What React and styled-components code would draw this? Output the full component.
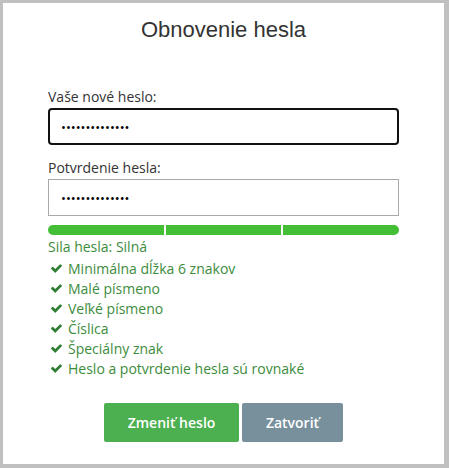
import React from "react";
import styled, { createGlobalStyle } from "styled-components";

const Global = createGlobalStyle`
  html, body { margin: 0; padding: 0; background: #c0c0c0; }
  body { font-family: "Open Sans", sans-serif; }
  * { box-sizing: border-box; }
`;

const Panel = styled.div`
  width: 441px;
  height: 461px;
  margin: 3px 0 0 3px;
  background: #fff;
  padding: 0 45px;
  display: flex;
  flex-direction: column;
`;

const Title = styled.h1`
  margin: 14px 0 0;
  font-family: "Liberation Sans", Arial, sans-serif;
  font-weight: 400;
  font-size: 22px;
  line-height: 26px;
  color: #333;
  text-align: center;
`;

const Field = styled.div`
  display: flex;
  flex-direction: column;
  margin-top: ${(p) => p.$top}px;
`;

const Label = styled.label`
  font-size: 14px;
  line-height: 19px;
  color: #333;
  margin-bottom: 2px;
`;

const Input = styled.input`
  width: 351px;
  height: 37px;
  border: ${(p) => (p.$focused ? "2px solid #111" : "1px solid #a9a9a9")};
  border-radius: ${(p) => (p.$focused ? "4px" : "0")};
  padding: 0 ${(p) => (p.$focused ? "11px" : "12px")};
  font-family: "Open Sans", sans-serif;
  font-size: 13px;
  color: #000;
  outline: none;
  background: #fff;
`;

const Bar = styled.div`
  display: grid;
  grid-template-columns: 1fr 1fr 1fr;
  gap: 2px;
  margin-top: 9px;
  width: 351px;
  height: 10px;
`;

const Segment = styled.div`
  background: #44be34;
  border-radius: ${(p) => p.$r};
`;

const Strength = styled.div`
  margin-top: 2px;
  font-size: 14px;
  line-height: 19px;
  color: #3c8c3c;
`;

const Checks = styled.ul`
  list-style: none;
  margin: 2px 0 0;
  padding: 0;
`;

const CheckItem = styled.li`
  display: flex;
  align-items: center;
  gap: 6px;
  height: 20px;
  padding-left: 3px;
  font-size: 14px;
  color: #3c8c3c;
`;

const Buttons = styled.div`
  display: flex;
  justify-content: center;
  gap: 3px;
  margin-top: 25px;
`;

const Button = styled.button`
  height: 39px;
  width: ${(p) => p.$w}px;
  border: none;
  border-radius: 2px;
  background: ${(p) => p.$bg};
  color: #fff;
  font-family: "Open Sans", sans-serif;
  font-size: 14px;
  font-weight: 600;
`;

const CheckIcon = () => (
  <svg width="11" height="9" viewBox="0 0 1550 1200" fill="#2e7d32">
    <path d="M1550 232q0 40-28 68l-724 724-136 136q-28 28-68 28t-68-28l-136-136-362-362q-28-28-28-68t28-68l136-136q28-28 68-28t68 28l294 295 656-657q28-28 68-28t68 28l136 136q28 28 28 68z" />
  </svg>
);

const items = [
  "Minimálna dĺžka 6 znakov",
  "Malé písmeno",
  "Veľké písmeno",
  "Číslica",
  "Špeciálny znak",
  "Heslo a potvrdenie hesla sú rovnaké",
];

export default function App() {
  return (
    <>
      <Global />
      <Panel>
        <Title>Obnovenie hesla</Title>
        <Field $top={44}>
          <Label>Vaše nové heslo:</Label>
          <Input type="password" defaultValue="abcdefghijklmn" $focused />
        </Field>
        <Field $top={13}>
          <Label>Potvrdenie hesla:</Label>
          <Input type="password" defaultValue="abcdefghijklmn" />
        </Field>
        <Bar>
          <Segment $r="5px 0 0 5px" />
          <Segment $r="0" />
          <Segment $r="0 5px 5px 0" />
        </Bar>
        <Strength>Sila hesla: Silná</Strength>
        <Checks>
          {items.map((t) => (
            <CheckItem key={t}>
              <CheckIcon />
              {t}
            </CheckItem>
          ))}
        </Checks>
        <Buttons>
          <Button $w={135} $bg="#4caf50">Zmeniť heslo</Button>
          <Button $w={101} $bg="#78909c">Zatvoriť</Button>
        </Buttons>
      </Panel>
    </>
  );
}
